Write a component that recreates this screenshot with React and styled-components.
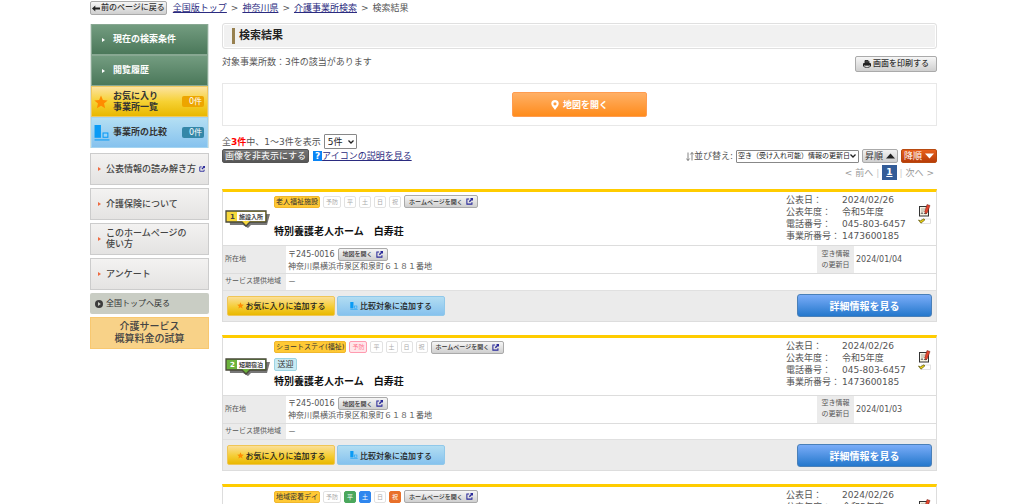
import React from 'react';
import styled, { createGlobalStyle, css } from 'styled-components';

const GlobalStyle = createGlobalStyle`
	* {
		box-sizing: border-box;
	}
	body {
		margin: 0;
		background: #fff;
		color: #555;
		font-family: 'DejaVu Sans', 'Noto Sans CJK JP', sans-serif;
		font-size: 9px;
		line-height: 12px;
	}
	button,
	select {
		font-family: inherit;
		margin: 0;
	}
	p, h1, h2, ul, ol, dl, dd {
		margin: 0;
		padding: 0;
	}
	ul, ol {
		list-style: none;
	}
`;

const ArrowLeftIcon = () => (
	<svg width="8" height="7" viewBox="0 0 8 7">
		<path d="M0 3.5L3.3 .5v2H8v2H3.3v2z" fill="#222" />
	</svg>
);

const ExternalIcon = ({ size = 7 }) => (
	<svg width={size} height={size} viewBox="0 0 8 8">
		<path d="M3.6 1.2H1v5.8h5.8V4.8" fill="none" stroke="#2a2a9a" strokeWidth="1.2" />
		<path d="M4.6 0H8v3.4L6.9 2.3 4.4 4.8l-1.2-1.2 2.5-2.5z" fill="#2a2a9a" />
	</svg>
);

const StarIcon = ({ size }) => (
	<svg width={size} height={size} viewBox="0 0 24 24">
		<path
			d="M12 1l3.2 7.6 8.2.7-6.2 5.4 1.9 8L12 18.4l-7.1 4.3 1.9-8L.6 9.3l8.2-.7z"
			fill="#ff8c00"
		/>
	</svg>
);

const CompareIcon = ({ size = 14 }) => (
	<svg width={size} height={size} viewBox="0 0 14 15">
		<rect x="0" y="0" width="6" height="12" fill="#0a9bf5" />
		<rect x="8" y="7.5" width="4.5" height="4" fill="#9ad4f8" stroke="#0a9bf5" />
		<path d="M0 14h14" stroke="#0a9bf5" strokeWidth="1" />
	</svg>
);

const PrintIcon = () => (
	<svg width="8" height="8" viewBox="0 0 8 8">
		<path d="M2 3V.5h3L6 1.6V3z" fill="#444" stroke="#222" strokeWidth=".9" />
		<path d="M0 4q0-1 1-1h6q1 0 1 1v2.4H6.8V5H1.2v1.4H0z" fill="#222" />
		<path d="M1.8 5.4h4.4v2H1.8z" fill="#eee" stroke="#222" strokeWidth=".7" />
	</svg>
);

const PinIcon = () => (
	<svg width="8" height="10" viewBox="0 0 8 10">
		<path
			d="M4 0a3.7 3.7 0 0 1 3.7 3.8C7.7 5.8 5.5 7.5 4 10 2.5 7.5.3 5.8.3 3.8A3.7 3.7 0 0 1 4 0zm0 2.200a1.600 1.600 0 1 0 0 3.200 1.600 1.600 0 0 0 0-3.200z"
			fill="#fff"
			fillRule="evenodd"
		/>
	</svg>
);

const SortIcon = () => (
	<svg width="8" height="9" viewBox="0 0 8 9">
		<path d="M2 .5v8M.3 6.5L2 8.5M6 8.5v-8M6 .5l1.8 2M3.7 6.5L2 8.5M4.3 2.5L6 .5" fill="none" stroke="#666" strokeWidth=".8" />
	</svg>
);

const TriangleIcon = ({ down, color }) => (
	<svg width="9" height="6" viewBox="0 0 9 6">
		<path d={down ? 'M0 .5h9L4.5 5.5z' : 'M0 5.5h9L4.5 .5z'} fill={color} />
	</svg>
);

const CircleArrowIcon = () => (
	<svg width="8" height="8" viewBox="0 0 8 8">
		<circle cx="4" cy="4" r="4" fill="#3c3c3c" />
		<path d="M3 2l2.8 2L3 6z" fill="#c9cdc4" />
	</svg>
);

const SurveyIcon = () => (
	<svg width="14" height="21" viewBox="0 0 14 21">
		<rect x="1.500" y="2.500" width="9" height="9.500" fill="#f7f4e6" stroke="#333" />
		<path d="M3 5h4M3 7h3" stroke="#9a9a8a" strokeWidth=".8" />
		<path d="M3 10l1-1.500 1 1.500M6 9.500h3" stroke="#444" strokeWidth=".8" fill="none" />
		<path d="M9 .5l3 1-2.600 7-1.900 1.500-.8-2.500z" fill="#e2452e" stroke="#6b2318" strokeWidth=".5" />
		<rect x="3.500" y="15" width="9" height="4.500" fill="#fff" stroke="#ddd" strokeWidth=".8" />
		<path d="M.5 16l2 .8 3.500-2 .8 1.200-3.900 3.200z" fill="#f5d911" stroke="#57500a" strokeWidth=".7" />
	</svg>
);

const ServiceMarker = ({ number, label, color, dark }) => (
	<svg width="46" height="20" viewBox="0 0 46 20">
		<path d="M4 4h41l-3 11H26l-3 3-5-3H5z" fill="#555" opacity=".8" />
		<path d="M1 1h40v11H25l-4 4-4-4H1z" fill={color} stroke="#4a4a3a" strokeWidth="1.300" />
		<rect x="12" y="2" width="28" height="9" fill="#fff" />
		<text x="5" y="9" fontSize="7" fontWeight="bold" fill={dark}>{number}</text>
		<text x="14" y="9" fontSize="6" fontWeight="bold" fill="#444">{label}</text>
	</svg>
);

const facilities = [
	{
		number: 1,
		service: '老人福祉施設',
		marker: '施設入所',
		color: '#f7d83c',
		dark: '#444',
		active: [],
		updated: '2024/01/04',
	},
	{
		number: 2,
		service: 'ショートステイ(福祉)',
		marker: '短期宿泊',
		color: '#6cb33c',
		dark: '#fff',
		active: ['予防'],
		pickup: true,
		updated: '2024/01/03',
	},
	{
		number: 3,
		service: '地域密着デイ',
		marker: '通所',
		color: '#f29a3c',
		dark: '#fff',
		active: ['平', '土', '祝'],
		pickup: true,
		updated: '2024/01/03',
	},
];

const Facility = ({ item }) => (
	<Card>
		<CardHead>
			<MarkerCell>
				<ServiceMarker number={item.number} label={item.marker} color={item.color} dark={item.dark} />
			</MarkerCell>
			<CardTitleCell>
				<Tags>
					<ServiceTag>{item.service}</ServiceTag>
					{['予防', '平', '土', '日', '祝'].map((day) => (
						<DayTag key={day} $day={item.active.includes(day) ? day : ''}>
							{day}
						</DayTag>
					))}
					<GrayButton $small>
						ホームページを開く
						<ExternalIcon />
					</GrayButton>
				</Tags>
				{item.pickup && <PickupTag>送迎</PickupTag>}
				<CardTitle $spaced={!item.pickup}>特別養護老人ホーム　白寿荘</CardTitle>
			</CardTitleCell>
			<Info>
				<dt>公表日：</dt>
				<dd>2024/02/26</dd>
				<dt>公表年度：</dt>
				<dd>令和5年度</dd>
				<dt>電話番号：</dt>
				<dd>045-803-6457</dd>
				<dt>事業所番号：</dt>
				<dd>1473600185</dd>
			</Info>
			<SurveyCell>
				<SurveyIcon />
			</SurveyCell>
		</CardHead>
		<DataTable>
			<colgroup>
				<col className="label" />
				<col />
				<col className="date-label" />
				<col className="date" />
			</colgroup>
			<tbody>
				<tr className="address">
					<th scope="row">所在地</th>
					<td>
						<PostalLine>
							〒245-0016
							<GrayButton $small>
								地図を開く
								<ExternalIcon />
							</GrayButton>
						</PostalLine>
						神奈川県横浜市泉区和泉町６１８１番地
					</td>
					<th scope="row" className="updated">
						空き情報
						<br />
						の更新日
					</th>
					<td>{item.updated}</td>
				</tr>
				<tr>
					<th scope="row">サービス提供地域</th>
					<td colSpan="3">－</td>
				</tr>
			</tbody>
		</DataTable>
		<CardFoot>
			<AddButton $kind="favorite">
				<StarIcon size={7} />
				お気に入りに追加する
			</AddButton>
			<AddButton>
				<CompareIcon size={8} />
				比較対象に追加する
			</AddButton>
			<DetailButton>詳細情報を見る</DetailButton>
		</CardFoot>
	</Card>
);

export default function App() {
	return (
		<Page>
			<GlobalStyle />
			<Breadcrumb>
				<GrayButton>
					<ArrowLeftIcon />
					前のページに戻る
				</GrayButton>
				<ol>
					<li><a href="#top">全国版トップ</a></li>
					<li><a href="#kanagawa">神奈川県</a></li>
					<li><a href="#search">介護事業所検索</a></li>
					<li>検索結果</li>
				</ol>
			</Breadcrumb>
			<Columns>
				<Sidebar>
					<MainMenu>
						<MenuButton $kind="green">現在の検索条件</MenuButton>
						<MenuButton $kind="green">閲覧履歴</MenuButton>
						<MenuButton $kind="yellow">
							<MenuIcon><StarIcon size={14} /></MenuIcon>
							<span>お気に入り<br />事業所一覧</span>
							<Count $color="#eda500">0件</Count>
						</MenuButton>
						<MenuButton $kind="blue">
							<MenuIcon><CompareIcon size={16} /></MenuIcon>
							<span>事業所の比較</span>
							<Count $color="#3487a8">0件</Count>
						</MenuButton>
					</MainMenu>
					<SubLink href="#guide">
						公表情報の読み解き方
						<ExternalIcon size={6} />
					</SubLink>
					<SubLink href="#about">介護保険について</SubLink>
					<SubLink href="#usage">このホームページの<br />使い方</SubLink>
					<SubLink href="#survey">アンケート</SubLink>
					<TopLink href="#national">
						<CircleArrowIcon />
						全国トップへ戻る
					</TopLink>
					<EstimateLink href="#estimate">介護サービス<br />概算料金の試算</EstimateLink>
				</Sidebar>
				<Main>
					<Heading><h1>検索結果</h1></Heading>
					<SummaryRow>
						<p>対象事業所数：3件の該当があります</p>
						<GrayButton $print>
							<PrintIcon />
							画面を印刷する
						</GrayButton>
					</SummaryRow>
					<MapBox>
						<MapButton>
							<PinIcon />
							地図を開く
						</MapButton>
					</MapBox>
					<CountRow>
						<label htmlFor="per-page">全<strong>3件</strong>中、1～3件を表示</label>
						<PerPage id="per-page"><option>5件</option></PerPage>
					</CountRow>
					<ToolRow>
						<DarkButton>画像を非表示にする</DarkButton>
						<HelpMark>?</HelpMark>
						<a href="#icons">アイコンの説明を見る</a>
						<SortGroup>
							<label htmlFor="sort"><SortIcon />並び替え:</label>
							<SortSelect id="sort">
								<option>空き（受け入れ可能）情報の更新日</option>
							</SortSelect>
							<OrderButton>昇順<TriangleIcon color="#222" /></OrderButton>
							<OrderButton $active>降順<TriangleIcon down color="#fff" /></OrderButton>
						</SortGroup>
					</ToolRow>
					<Pager>
						<span>&lt; 前へ</span>
						<i>|</i>
						<a href="#page1">1</a>
						<i>|</i>
						<span>次へ &gt;</span>
					</Pager>
					<Cards>
						{facilities.map((item) => (
							<Facility key={item.number} item={item} />
						))}
					</Cards>
				</Main>
			</Columns>
		</Page>
	);
}

const Page = styled.div`
	max-width: 850px;
	margin: 0 auto;
	padding-left: 3px;
`;

const Breadcrumb = styled.nav`
	display: flex;
	align-items: center;
	gap: 6px;
	height: 16px;
	& ol {
		display: flex;
	}
	& li + li::before {
		content: '>';
		margin: 0 4px;
	}
	& a {
		color: #2b2b80;
	}
`;

const GrayButton = styled.button`
	display: inline-flex;
	align-items: center;
	justify-content: center;
	gap: 1px;
	height: 14px;
	padding: 0 1px;
	border: 1px solid #aaa;
	border-radius: 2px;
	background: linear-gradient(#f6f6f6, #cfcfcf);
	color: #333;
	font-size: 8px;
	font-weight: 500;
	line-height: 10px;
	white-space: nowrap;
	${({ $small }) => $small && css`
		height: 13px;
		padding: 0 4px;
		gap: 3px;
		font-size: 6px;
	`}
	${({ $print }) => $print && css`
		height: 16px;
		padding: 0 7px;
		gap: 2px;
	`}
`;

const Columns = styled.div`
	display: flex;
	align-items: flex-start;
	gap: 13px;
	padding-top: 7px;
`;

const Sidebar = styled.aside`
	display: flex;
	flex-direction: column;
	gap: 3px;
	flex: 0 0 119px;
	padding-top: 1px;
`;

const MainMenu = styled.div`
	display: flex;
	flex-direction: column;
	margin-bottom: 2px;
	padding: 0 1px;
	background: #d8e2dc;
`;

const menuKinds = {
	green: css`
		background: linear-gradient(#739c80, #4b785a);
		border-color: #88a892;
		color: #fff;
		&::before {
			content: '';
			width: 0;
			margin-left: 9px;
			margin-right: 8px;
			border: 2px solid transparent;
			border-left: 3px solid #fff;
			border-right: 0;
		}
	`,
	yellow: css`
		background: linear-gradient(#fce3a0, #f6d133 50%, #e9b800);
		border-color: #f0c860;
		color: #333;
	`,
	blue: css`
		background: linear-gradient(#b4dff3, #86c2ee);
		border-color: #a4d4f0;
		color: #333;
	`,
};

const MenuButton = styled.button`
	display: flex;
	align-items: center;
	height: 31px;
	padding: 0 3px 0 1px;
	border: 1px solid;
	font-size: 9px;
	font-weight: bold;
	line-height: 11px;
	text-align: left;
	${({ $kind }) => menuKinds[$kind]}
`;

const MenuIcon = styled.span`
	display: flex;
	width: 20px;
	padding-left: 1px;
`;

const Count = styled.span`
	width: 22px;
	margin-left: auto;
	padding-right: 2px;
	border-radius: 2px;
	background: ${({ $color }) => $color};
	color: #fff;
	font-size: 8px;
	font-weight: normal;
	text-align: right;
`;

const SubLink = styled.a`
	display: flex;
	align-items: center;
	gap: 3px;
	height: 32px;
	padding-left: 7px;
	border: 1px solid #ccc;
	background: linear-gradient(#f3f2f1, #e4e3e2);
	color: #444;
	font-weight: 500;
	line-height: 11px;
	text-decoration: none;
	white-space: nowrap;
	&::before {
		content: '';
		margin-right: 2px;
		border: 2px solid transparent;
		border-left: 3px solid #ee6a40;
		border-right: 0;
	}
`;

const TopLink = styled.a`
	display: flex;
	align-items: center;
	gap: 3px;
	height: 21px;
	padding-left: 5px;
	border-radius: 2px;
	background: #c9cdc4;
	color: #333;
	font-size: 8px;
	text-decoration: none;
`;

const EstimateLink = styled.a`
	padding: 3px 0;
	border: 1px solid #f8c870;
	background: #f8d288;
	color: #444;
	font-size: 10px;
	font-weight: 500;
	text-align: center;
	text-decoration: none;
`;

const Main = styled.main`
	flex: 1;
	min-width: 0;
`;

const Heading = styled.div`
	display: flex;
	align-items: center;
	height: 26px;
	padding-left: 9px;
	border: 1px solid #e0e0e0;
	border-radius: 3px;
	background: #f1f1f1;
	box-shadow: inset 0 0 0 1px #fff;
	& h1 {
		padding-left: 4px;
		border-left: 3px solid #97804f;
		color: #222;
		font-size: 11px;
		line-height: 16px;
	}
`;

const SummaryRow = styled.div`
	display: flex;
	align-items: flex-start;
	justify-content: space-between;
	padding: 7px 0 11px;
`;

const MapBox = styled.div`
	display: flex;
	justify-content: center;
	padding: 8px;
	border: 1px solid #e8e8e8;
`;

const MapButton = styled.button`
	display: flex;
	align-items: center;
	justify-content: center;
	gap: 4px;
	width: 135px;
	height: 25px;
	border: 1px solid #ff9c50;
	border-radius: 2px;
	background: linear-gradient(#ffb066, #ff8c1c);
	color: #fff;
	font-size: 9px;
	font-weight: bold;
`;

const CountRow = styled.div`
	display: flex;
	align-items: center;
	gap: 3px;
	padding-top: 8px;
	& strong {
		color: #f00;
	}
`;

const selectStyle = css`
	appearance: none;
	border: 1px solid #888;
	border-radius: 1px;
	color: #222;
	background: #fff
		url("data:image/svg+xml,%3Csvg xmlns='http://www.w3.org/2000/svg' width='6' height='4'%3E%3Cpath d='M.5 .5l2.5 2.5 2.5-2.5' fill='none' stroke='%23222' stroke-width='1.3'/%3E%3C/svg%3E")
		no-repeat right 2px center;
`;

const PerPage = styled.select`
	${selectStyle}
	width: 33px;
	height: 15px;
	padding: 0 3px;
	font-size: 9px;
`;

const ToolRow = styled.div`
	display: flex;
	align-items: center;
	height: 14px;
	& > a {
		color: #2b2b80;
	}
`;

const DarkButton = styled.button`
	height: 14px;
	padding: 0 2px;
	border: 1px solid #555;
	border-radius: 2px;
	background: linear-gradient(#777, #565656);
	color: #fff;
	font-size: 9px;
	line-height: 12px;
`;

const HelpMark = styled.span`
	width: 9px;
	height: 10px;
	margin-left: 4px;
	background: #0a84f5;
	color: #fff;
	font-weight: bold;
	line-height: 10px;
	text-align: center;
`;

const SortGroup = styled.div`
	display: flex;
	align-items: center;
	gap: 3px;
	margin-left: auto;
	& label {
		display: flex;
		align-items: center;
	}
`;

const SortSelect = styled.select`
	${selectStyle}
	width: 123px;
	height: 13px;
	padding: 0 1px;
	font-size: 7px;
`;

const OrderButton = styled.button`
	display: flex;
	align-items: center;
	gap: 3px;
	height: 14px;
	padding: 0 2px;
	border: 1px solid ${({ $active }) => ($active ? '#b84a10' : '#aaa')};
	border-radius: 2px;
	background: ${({ $active }) =>
		$active ? 'linear-gradient(#e8601c, #b83c08)' : 'linear-gradient(#f2f2f2, #cfcfcf)'};
	color: ${({ $active }) => ($active ? '#fff' : '#333')};
	font-size: 9px;
	line-height: 12px;
`;

const Pager = styled.div`
	display: flex;
	align-items: center;
	justify-content: flex-end;
	gap: 3px;
	height: 19px;
	padding-right: 3px;
	color: #999;
	& i {
		color: #ccc;
		font-style: normal;
	}
	& a {
		padding: 0 4px;
		background: #335c98;
		color: #fff;
		font-weight: bold;
		line-height: 15px;
	}
`;

const Cards = styled.div`
	display: flex;
	flex-direction: column;
	gap: 13px;
	padding-top: 7px;
`;

const Card = styled.section`
	border: 1px solid #ddd;
	border-top: 3px solid #fc0;
`;

const CardHead = styled.div`
	display: flex;
	align-items: stretch;
`;

const MarkerCell = styled.div`
	display: flex;
	align-items: center;
	flex: 0 0 51px;
	padding-top: 3px;
	padding-left: 2px;
`;

const CardTitleCell = styled.div`
	flex: 1;
	padding-top: 3px;
	padding-bottom: 5px;
`;

const Tags = styled.div`
	display: flex;
	align-items: center;
	gap: 3px;
`;

const ServiceTag = styled.span`
	padding: 0 1px;
	border: 1px solid #f0b72c;
	border-radius: 2px;
	background: #ffc935;
	color: #333;
	font-size: 7px;
	line-height: 10px;
`;

const dayColors = {
	'': ['#fff', '#e2e2e2', '#aaa'],
	予防: ['#ffe6ea', '#ff9bb0', '#ff7690'],
	平: ['#4ba75c', '#4ba75c', '#fff'],
	土: ['#2f86ee', '#2f86ee', '#fff'],
	祝: ['#e8702a', '#e8702a', '#fff'],
};

const DayTag = styled.span`
	padding: 0 2px;
	border: 1px solid ${({ $day }) => dayColors[$day][1]};
	border-radius: 2px;
	background: ${({ $day }) => dayColors[$day][0]};
	color: ${({ $day }) => dayColors[$day][2]};
	font-size: 6px;
	line-height: 10px;
`;

const PickupTag = styled.span`
	display: block;
	width: 23px;
	margin-top: 4px;
	border: 1px solid #9cd3e2;
	border-radius: 2px;
	background: #c8eaf3;
	color: #333;
	font-size: 8px;
	line-height: 11px;
	text-align: center;
`;

const CardTitle = styled.h2`
	margin-top: ${({ $spaced }) => ($spaced ? '16px' : '3px')};
	color: #111;
	font-size: 10px;
	line-height: 16px;
`;

const Info = styled.dl`
	display: grid;
	grid-template-columns: 56px 76px;
	align-content: start;
	padding-top: 2px;
	white-space: nowrap;
`;

const SurveyCell = styled.div`
	flex: 0 0 18px;
	padding-top: 12px;
`;

const DataTable = styled.table`
	width: 100%;
	border-collapse: collapse;
	table-layout: fixed;
	font-size: 8px;
	line-height: 11px;
	& .label {
		width: 63px;
	}
	& .date-label {
		width: 37px;
	}
	& .date {
		width: 82px;
	}
	& tr {
		height: 16px;
		border-top: 1px solid #ddd;
	}
	& .address {
		height: 28px;
	}
	& th {
		padding: 0 2px;
		background: #ebebeb;
		font-size: 7px;
		font-weight: normal;
		text-align: left;
		white-space: nowrap;
	}
	& .updated {
		text-align: center;
	}
	& td {
		padding: 0 2px;
	}
`;

const PostalLine = styled.div`
	display: flex;
	align-items: center;
	gap: 3px;
`;

const CardFoot = styled.div`
	display: flex;
	align-items: center;
	gap: 2px;
	height: 31px;
	padding: 0 4px;
	background: #ebebeb;
	border-top: 1px solid #e0e0e0;
`;

const AddButton = styled.button`
	display: flex;
	align-items: center;
	justify-content: center;
	gap: 2px;
	width: 108px;
	height: 20px;
	padding: 0;
	border: 1px solid ${({ $kind }) => ($kind ? '#f0c656' : '#90c8ea')};
	border-radius: 2px;
	background: ${({ $kind }) =>
		$kind ? 'linear-gradient(#fbdf98, #f5cd34 55%, #e9b800)' : 'linear-gradient(#b2ddf2, #86c2ee)'};
	color: #222;
	font-size: 8px;
	font-weight: 500;
`;

const DetailButton = styled.button`
	width: 135px;
	height: 23px;
	margin-left: auto;
	border: 1px solid #4a80b8;
	border-radius: 3px;
	background: linear-gradient(#7aacf8, #2478cc);
	color: #fff;
	font-size: 10px;
	font-weight: bold;
`;
